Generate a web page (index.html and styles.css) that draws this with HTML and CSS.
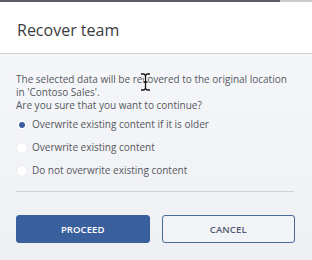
FILE: index.html
```html
<!DOCTYPE html>
<html>
<head>
<meta charset="utf-8">
<link rel="stylesheet" href="styles.css">
</head>
<body>
<div class="topbar"><span class="topbar-dark"></span><span class="topbar-light"></span></div>
<div class="dialog">
  <div class="header">Recover team</div>
  <div class="body">
    <p class="msg">The selected data will be recovered to the original location in 'Contoso Sales'.<br>Are you sure that you want to continue?</p>
    <div class="options">
      <label class="opt"><span class="radio checked"></span>Overwrite existing content if it is older</label>
      <label class="opt"><span class="radio"></span>Overwrite existing content</label>
      <label class="opt"><span class="radio"></span>Do not overwrite existing content</label>
    </div>
    <div class="divider"></div>
    <div class="buttons">
      <button class="btn primary">PROCEED</button>
      <button class="btn secondary">CANCEL</button>
    </div>
  </div>
</div>
<svg class="cursor" width="11" height="18" viewBox="0 0 11 18"><path d="M1 1h3l1.5 1.5L7 1h3M5.5 2.5v13M1 17h3l1.5-1.5L7 17h3M3.5 9h4" fill="none" stroke="#fff" stroke-width="3"/><path d="M1 1h3l1.5 1.5L7 1h3M5.5 2.5v13M1 17h3l1.5-1.5L7 17h3M3.5 9h4" fill="none" stroke="#111" stroke-width="1.3"/></svg>
</body>
</html>
```
FILE: styles.css
```css
html, body {
  margin: 0;
  padding: 0;
}
body {
  width: 312px;
  height: 260px;
  overflow: hidden;
  font-family: "Open Sans", "DejaVu Sans", sans-serif;
  background: #f3f4f7;
  position: relative;
}
.topbar {
  display: flex;
  height: 2px;
}
.topbar-dark {
  width: 280px;
  background: #5a5d63;
}
.topbar-light {
  flex: 1;
  background: #c9cbcf;
}
.dialog {
  display: flex;
  flex-direction: column;
}
.header {
  height: 52px;
  background: #fff;
  border-bottom: 1px solid #cdd0d5;
  box-sizing: border-box;
  padding: 17px 0 0 17px;
  font-size: 16px;
  color: #3a3c40;
  line-height: 22px;
}
.body {
  background: linear-gradient(#f5f6f9, #eef0f3);
  padding: 19px 17px 0 16px;
  height: 206px;
  box-sizing: border-box;
}
.msg {
  margin: 0;
  font-size: 10px;
  line-height: 13px;
  color: #55585e;
}
.options {
  display: flex;
  flex-direction: column;
  gap: 10px;
  margin-top: 6px;
}
.opt {
  display: flex;
  align-items: center;
  gap: 5px;
  font-size: 10px;
  line-height: 13px;
  color: #55585e;
}
.radio {
  width: 10px;
  height: 10px;
  margin-left: 1px;
  border-radius: 50%;
  background: #fff;
  box-shadow: 0 0 0 0.5px #e3e5e9;
  display: flex;
  align-items: center;
  justify-content: center;
}
.radio.checked::after {
  content: "";
  width: 6px;
  height: 6px;
  border-radius: 50%;
  background: #3b5ea0;
}
.divider {
  height: 1px;
  background: #cfd1d6;
  margin: 14px 1px 0 0;
}
.buttons {
  display: flex;
  gap: 12px;
  margin-top: 23px;
}
.btn {
  width: 134px;
  height: 28px;
  box-sizing: border-box;
  border-radius: 3px;
  font-family: "Open Sans", "DejaVu Sans", sans-serif;
  font-size: 9.5px;
  font-weight: 600;
  letter-spacing: 0.1px;
  padding: 0;
}
.primary {
  background: #3a5f9d;
  border: 1px solid #3a5f9d;
  color: #fff;
}
.secondary {
  background: #f2f3f6;
  border: 1.5px solid #4d6a9c;
  color: #4f5b74;
}
.cursor {
  position: absolute;
  left: 140px;
  top: 73px;
}
```
